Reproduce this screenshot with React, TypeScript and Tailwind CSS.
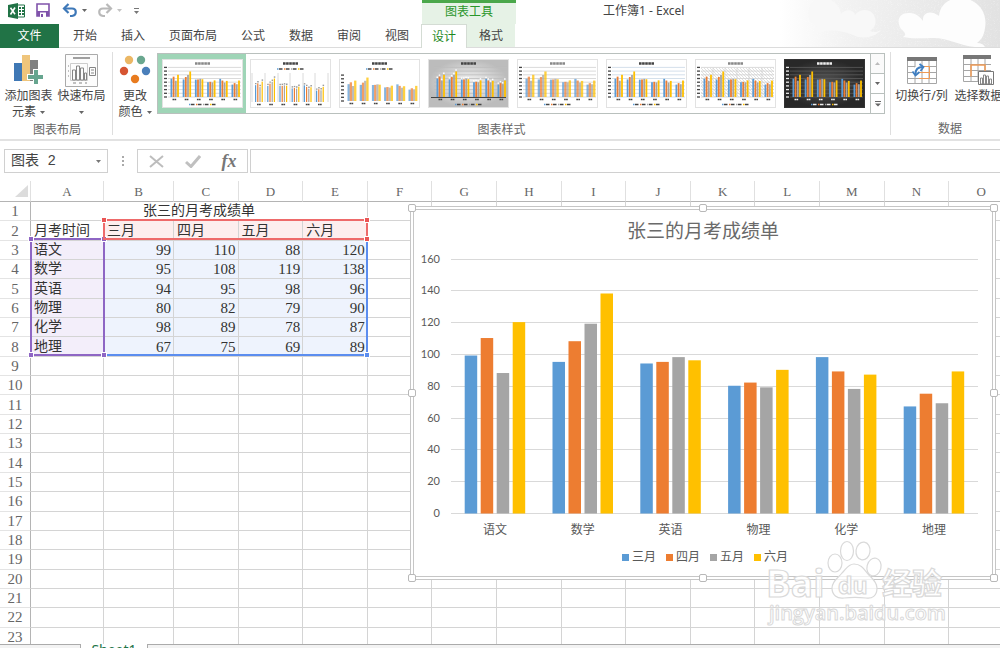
import { ReactNode } from 'react';
import clsx from 'clsx';

const SERIES = [
  { name: '三月', color: '#5b9bd5', values: [99, 95, 94, 80, 98, 67] },
  { name: '四月', color: '#ed7d31', values: [110, 108, 95, 82, 89, 75] },
  { name: '五月', color: '#a5a5a5', values: [88, 119, 98, 79, 78, 69] },
  { name: '六月', color: '#ffc000', values: [120, 138, 96, 90, 87, 89] },
];

const SUBJECTS = ['语文', '数学', '英语', '物理', '化学', '地理'];
const TABS = ['开始', '插入', '页面布局', '公式', '数据', '审阅', '视图'];
const COLUMNS = 'ABCDEFGHIJKLMNO'.split('');
const TITLE = '张三的月考成绩单';

type ThumbKind = 'plain' | 'panels' | 'wide' | 'gray' | 'soft' | 'blue' | 'hatch' | 'dark';
const THUMBS: ThumbKind[] = ['plain', 'panels', 'wide', 'gray', 'soft', 'blue', 'hatch', 'dark'];

export default function App() {
  return (
    <div className="flex h-screen flex-col overflow-hidden bg-white font-['Noto_Sans','Noto_Sans_CJK_SC',sans-serif] text-xs text-[#444]">
      <Header />
      <Ribbon />
      <FormulaBar />
      <Sheet />
      <footer className="flex h-1 shrink-0 overflow-hidden">
        <div className="w-[81px] border-t border-r border-[#ababab] bg-[#f3f3f3]" />
        <button className="h-3 w-[66px] shrink-0 bg-white text-sm leading-3 text-[#217346]">Sheet1</button>
        <div className="flex-1 border-t border-l border-[#ababab] bg-[#f3f3f3]" />
      </footer>
    </div>
  );
}

function Header() {
  return (
    <header className="relative shrink-0">
      <Clouds />
      {/* Quick access + title */}
      <div className="relative flex h-6">
        <div className="flex w-[422px] shrink-0 items-start pt-[3px] pl-2">
          <ExcelLogo />
          <button aria-label="保存" className="ml-[11px]">
            <svg width="14" height="14" viewBox="0 0 14 14">
              <path d="M1 1h12v12H1z" fill="#fff" stroke="#8053ab" strokeWidth="1.6" />
              <path d="M1 8h12v5H1z" fill="#8053ab" />
              <path d="M4 9.500h6V14H4z" fill="#fff" />
              <path d="M5 11h2v3H5z" fill="#8053ab" />
            </svg>
          </button>
          <button aria-label="撤消" className="ml-3">
            <UndoArrow color="#3e78b8" />
          </button>
          <Caret className="mt-[6px] ml-1" color="#666" />
          <button aria-label="恢复" className="ml-[10px] -scale-x-100">
            <UndoArrow color="#b9b9b9" />
          </button>
          <Caret className="mt-[6px] ml-1" color="#c4c4c4" />
          <svg className="mt-[5px] ml-3" width="5" height="7" viewBox="0 0 5 7">
            <path d="M0 .5h5" stroke="#777" />
            <path d="M0 3h5L2.5 6z" fill="#777" />
          </svg>
        </div>
        <div className="w-[94px] shrink-0 border-t-[3px] border-[#4ba84b] bg-[#e6f2e6] text-center leading-[17px] text-[#2a962a]">图表工具</div>
        <h1 className="ml-[87px] leading-[22px]">工作簿1 - Excel</h1>
      </div>

      <nav className="relative flex h-6 border-b border-[#dcdcdc]">
        <button className="mr-0.5 h-6 w-[59px] bg-[#217346] text-white">文件</button>
        {TABS.map(t => (
          <button key={t} className="px-3">{t}</button>
        ))}
        <button className="h-6 w-[46px] border border-b-0 border-[#d4dcd4] bg-white text-[#1e8a1e]">设计</button>
        <button className="w-12 bg-[#e6f2e6]">格式</button>
      </nav>
    </header>
  );
}

function Ribbon() {
  return (
    <div className="flex h-[93px] shrink-0 overflow-hidden border-b-2 border-[#e2e2e2]">
      <Group label="图表布局" className="w-[112px] pl-0.5">
        <BigButton className="w-[53px]" icon={<AddElementIcon />} lines={['添加图表', '元素']} caret />
        <BigButton className="w-[53px]" icon={<QuickLayoutIcon />} lines={['快速布局', '']} caret />
      </Group>
      <Divider />
      <Group label="图表样式" className="w-[777px]">
        <BigButton className="w-11" icon={<PaletteIcon />} lines={['更改', '颜色']} caret />
        <div className="mt-[5px] flex h-[61px] w-[728px] border border-[#b9c0bd]">
          <div className="flex flex-1 gap-2">
            {THUMBS.map((kind, i) => (
              <button
                key={kind}
                aria-label={`样式 ${i + 1}`}
                className={clsx(
                  'flex shrink-0 items-center justify-center',
                  i === 0 ? '-mr-1 w-[88px] bg-[#9fd5b7]' : 'w-[81px]'
                )}
              >
                <Thumb kind={kind} />
              </button>
            ))}
          </div>
          <div className="flex w-[14px] flex-col divide-y divide-[#b9c0bd] border-l border-[#b9c0bd]">
            <button aria-label="上一行" className="flex flex-1 items-center justify-center bg-[#fafafa]">
              <svg width="5" height="3" viewBox="0 0 5 3"><path d="M0 3h5L2.5 0z" fill="#bbb" /></svg>
            </button>
            <button aria-label="下一行" className="flex flex-1 items-center justify-center">
              <Caret color="#666" />
            </button>
            <button aria-label="其他" className="flex flex-1 items-center justify-center">
              <svg width="6" height="6" viewBox="0 0 6 6">
                <path d="M0 .5h6" stroke="#666" />
                <path d="M0 2.5h6L3 5.5z" fill="#666" />
              </svg>
            </button>
          </div>
        </div>
      </Group>
      <Divider />
      <Group label="数据" className="w-[116px] pl-0.5">
        <BigButton className="w-[57px]" icon={<SwitchIcon />} lines={['切换行/列']} />
        <BigButton className="w-[57px]" icon={<SelectDataIcon />} lines={['选择数据']} />
      </Group>
    </div>
  );
}

function Group({ label, className, children }: { label: string; className: string; children: ReactNode }) {
  return (
    <section className={clsx('flex shrink-0 flex-col', className)}>
      <div className="flex h-[73px]">{children}</div>
      <p className="text-center leading-5 text-[#666]">{label}</p>
    </section>
  );
}

function Divider() {
  return <div className="my-1 w-px shrink-0 bg-[#dedede]" />;
}

function BigButton({ icon, lines, caret, className }: { icon: ReactNode; lines: string[]; caret?: boolean; className: string }) {
  return (
    <button className={clsx('flex shrink-0 flex-col items-center whitespace-nowrap', className)}>
      <span className="flex h-10 items-center justify-center pt-1">{icon}</span>
      {lines.map((line, i) => (
        <span key={i} className="flex h-4 items-center gap-1 leading-4">
          {line}
          {caret && i === lines.length - 1 && <Caret color="#666" />}
        </span>
      ))}
    </button>
  );
}

function FormulaBar() {
  return (
    <div className="flex h-10 shrink-0 items-center pl-1">
      <div className="flex h-6 w-[104px] shrink-0 items-center border border-[#d0d0d0] px-[6px]">
        <input
          aria-label="名称框"
          defaultValue="图表 2"
          className="w-full min-w-0 bg-transparent font-['Liberation_Mono','Noto_Sans_CJK_SC',monospace] text-sm outline-none"
        />
        <Caret color="#777" />
      </div>
      <svg className="mx-3 shrink-0" width="5" height="12" viewBox="0 0 5 12" fill="#aaa">
        <path d="M2 1h2v2H2zM2 5h2v2H2zM2 9h2v2H2z" />
      </svg>
      <div className="flex h-6 w-[111px] shrink-0 items-center justify-around border border-[#d0d0d0]">
        <button aria-label="取消">
          <svg width="15" height="13" viewBox="0 0 15 13"><path d="M1 1l13 11M14 1L1 12" stroke="#bdbdbd" strokeWidth="2" /></svg>
        </button>
        <button aria-label="输入">
          <svg width="16" height="13" viewBox="0 0 16 13"><path d="M1 7l5 4.500L15 1" fill="none" stroke="#c0c0c0" strokeWidth="3" /></svg>
        </button>
        <button className="font-['Liberation_Serif',serif] text-lg leading-5 font-bold text-[#777] italic">fx</button>
      </div>
      <input aria-label="编辑栏" className="ml-0.5 h-6 min-w-0 flex-1 border border-r-0 border-[#d0d0d0] px-2 outline-none" />
    </div>
  );
}

function Sheet() {
  return (
    <main className="relative min-h-0 flex-1 overflow-hidden">
      <table className="h-[466px] w-[1014px] table-fixed border-separate border-spacing-0 font-['Liberation_Serif','Noto_Sans_CJK_SC',serif] text-[15px] leading-[18px] text-[#333]">
        <colgroup>
          <col className="w-[31px]" />
          <col className="w-[73px]" />
          <col className="w-[70px]" />
        </colgroup>
        <thead>
          <tr className="h-5 text-[13px] text-[#666]">
            <th className="border-r border-b border-r-[#e0e0e0] border-b-[#b4b4b4] p-0">
              <svg className="mr-0.5 ml-auto" width="13" height="12" viewBox="0 0 13 12"><path d="M13 0v12H0z" fill="#dcdcdc" /></svg>
            </th>
            {COLUMNS.map(c => (
              <th key={c} className="border-r border-b border-r-[#e0e0e0] border-b-[#b4b4b4] p-0 pt-0.5 font-normal">{c}</th>
            ))}
          </tr>
        </thead>
        <tbody>
          {Array.from({ length: 23 }, (_, i) => i + 1).map(row => (
            <tr key={row}>
              <th className="border-r border-b border-r-[#b4b4b4] border-b-[#e4e4e4] p-0 font-normal text-[#666]">{row}</th>
              {row === 1 && (
                <td colSpan={5} className="border-r border-b border-[#d4d4d4] p-0 text-center text-sm leading-[18px]">{TITLE}</td>
              )}
              {COLUMNS.slice(row === 1 ? 5 : 0).map(c => (
                <Cell key={c} row={row} col={COLUMNS.indexOf(c)} />
              ))}
            </tr>
          ))}
        </tbody>
      </table>

      {/* Ranges that feed the chart */}
      <Range className="top-[57px] left-[103px] h-[118px] w-[265px] border-[#5b8def]" handle="bg-[#5b8def]" corners={['br']} />
      <Range className="top-[57px] left-[30px] h-[118px] w-[75px] border-[#8e66c4]" handle="bg-[#8e66c4]" corners={['tl', 'tr', 'bl', 'br']} />
      <Range className="top-[38px] left-[103px] h-[21px] w-[265px] border-[#ee6a6a]" handle="bg-[#ea5555]" corners={['tl', 'tr', 'br']} />

      <Chart />
      <Watermark />
    </main>
  );
}

function Cell({ row, col }: { row: number; col: number }) {
  const inTable = row >= 2 && row <= 8 && col < 5;
  let text: string | number = '';
  if (inTable) {
    if (col === 0) text = row === 2 ? '月考时间' : SUBJECTS[row - 3];
    else text = row === 2 ? SERIES[col - 1].name : SERIES[col - 1].values[row - 3];
  }
  return (
    <td
      className={clsx(
        'border-r border-b border-[#d4d4d4] p-0',
        typeof text === 'number' ? 'pr-0.5 text-right' : 'pl-[3px] text-sm leading-[18px]',
        inTable && row === 2 && col > 0 && 'bg-[#fdeeee]',
        inTable && row > 2 && col === 0 && 'bg-[#f3eefa]',
        inTable && row > 2 && col > 0 && 'bg-[#eef3fd]'
      )}
    >
      {text}
    </td>
  );
}

const CORNERS: Record<string, string> = {
  tl: '-top-[3px] -left-[3px]',
  tr: '-top-[3px] -right-[3px]',
  bl: '-bottom-[3px] -left-[3px]',
  br: '-right-[3px] -bottom-[3px]',
};

function Range({ className, handle, corners }: { className: string; handle: string; corners: string[] }) {
  return (
    <div className={clsx('pointer-events-none absolute border-2', className)}>
      {corners.map(c => (
        <i key={c} className={clsx('absolute size-1 outline outline-white', CORNERS[c], handle)} />
      ))}
    </div>
  );
}

const HANDLES = [
  '-top-[6px] -left-[6px]',
  '-top-[6px] left-1/2 -translate-x-1/2',
  '-top-[6px] -right-[6px]',
  'top-1/2 -left-[6px] -translate-y-1/2',
  'top-1/2 -right-[6px] -translate-y-1/2',
  '-bottom-[6px] -left-[6px]',
  '-bottom-[6px] left-1/2 -translate-x-1/2',
  '-right-[6px] -bottom-[6px]',
];

function Chart() {
  const y = (v: number) => 265 - (v * 254.5) / 160;
  return (
    <figure className="absolute top-[25px] left-[410px] h-[374px] w-[586px] border-4 border-double border-[#c6c6c6] bg-white text-[#595959]">
      <h2 className="h-[38px] pt-2 text-center text-[19px] leading-[26px] text-[#6a6a6a]">{TITLE}</h2>
      <svg width="578" height="290" viewBox="0 0 578 290" className="block">
        {[0, 20, 40, 60, 80, 100, 120, 140, 160].map(v => (
          <g key={v}>
            <path d={`M37 ${Math.round(y(v)) + 0.5}H564`} stroke="#d9d9d9" />
            <text x="26" y={y(v) + 4} textAnchor="end" fontSize="11" fill="#595959" className="font-['Lato',sans-serif]">{v}</text>
          </g>
        ))}
        {SUBJECTS.map((s, i) => {
          const cx = 81 + i * 87.8;
          return (
            <g key={s}>
              {SERIES.map((ser, j) => (
                <rect key={ser.name} x={cx - 30.3 + j * 16} y={y(ser.values[i])} width="12.5" height={265.5 - y(ser.values[i])} fill={ser.color} />
              ))}
              <text x={cx} y="286" textAnchor="middle" fontSize="12" fill="#595959">{s}</text>
            </g>
          );
        })}
      </svg>
      <figcaption className="flex justify-center gap-[10px] pt-[10px] pl-1 leading-[18px]">
        {SERIES.map(s => (
          <span key={s.name} className="flex items-center gap-[3px]">
            <i className="size-[7px]" style={{ background: s.color }} />
            {s.name}
          </span>
        ))}
      </figcaption>
      {HANDLES.map(h => (
        <i key={h} className={clsx('absolute size-2 rounded-[2px] border border-[#b8b8b8] bg-white', h)} />
      ))}
    </figure>
  );
}

function Watermark() {
  return (
    <svg className="pointer-events-none absolute top-[355px] left-[764px]" width="190" height="96" viewBox="0 0 190 96" fill="#fff" fillOpacity="0.75" stroke="#d9d9d9" strokeWidth="1.2">
      <text x="2" y="61" fontSize="37" fontWeight="700" className="font-['Open_Sans',sans-serif]">Bai</text>
      <text x="118" y="58" fontSize="30" fontWeight="700" className="font-['Noto_Sans_CJK_SC',sans-serif]">经验</text>
      <ellipse cx="71" cy="27" rx="7" ry="9" />
      <ellipse cx="83" cy="15" rx="6.500" ry="9.500" />
      <ellipse cx="99" cy="15" rx="7" ry="9" transform="rotate(8 99 15)" />
      <ellipse cx="110" cy="31" rx="7" ry="9" transform="rotate(14 110 31)" />
      <path d="M90 28c7 0 10 5 14 10 4 4 9 8 9 14 0 8-5 11-11 10-8-1-14-1-22 0-7 1-12-3-12-10 0-7 6-10 10-15 4-4 6-9 12-9z" />
      <text x="74" y="58" fontSize="23" fontWeight="700" className="font-['Open_Sans',sans-serif]">du</text>
      <text x="5" y="84" fontSize="20" fontWeight="600" strokeWidth="1" className="font-['Open_Sans',sans-serif]">jingyan.baidu.com</text>
    </svg>
  );
}

/* Gallery thumbnail: the same data, drawn at 81x49 in each style */
function Thumb({ kind }: { kind: ThumbKind }) {
  const dark = kind === 'dark';
  const topLegend = kind === 'panels' || kind === 'wide';
  const base = kind === 'panels' ? 43 : kind === 'wide' ? 42 : 38;
  const scale = topLegend ? 0.17 : 0.185;
  const barW = kind === 'panels' ? 1.2 : kind === 'wide' || kind === 'soft' ? 2.3 : 1.8;
  const ink = dark ? '#eee' : '#444';
  const grid = dark ? '#5c5c5c' : kind === 'gray' ? '#bdbdbd' : kind === 'blue' ? '#c9d8e6' : '#d0d0d0';
  return (
    <svg width="81" height="49" viewBox="0 0 81 49" className="shrink-0">
      <defs>
        <radialGradient id="thumb-gray"><stop offset="0" stopColor="#f8f8f8" /><stop offset="1" stopColor="#bcbcbc" /></radialGradient>
        <radialGradient id="thumb-dark"><stop offset="0" stopColor="#555" /><stop offset="1" stopColor="#282828" /></radialGradient>
        <pattern id="thumb-hatch" width="3" height="3" patternUnits="userSpaceOnUse"><path d="M0 0l3 3" stroke="#d4d4d4" strokeWidth="0.7" /></pattern>
      </defs>
      <rect x="0.500" y="0.500" width="80" height="48" fill={dark ? 'url(#thumb-dark)' : kind === 'gray' ? 'url(#thumb-gray)' : '#fff'} stroke={dark ? '#333' : '#e2e2e2'} />
      {kind === 'hatch' && <rect x="6" y="9" width="73" height="29" fill="url(#thumb-hatch)" />}
      {kind === 'panels'
        ? [2, 15, 28, 40, 53, 65, 78].map(x => <path key={x} d={`M${x} 14V43`} stroke={grid} strokeWidth="0.8" />)
        : [0, 1, 2, 3, 4, 5, 6, 7, 8].map(i => {
            const y = base - i * 3.7;
            if (topLegend && i > 7) return null;
            return (
              <g key={i}>
                {kind !== 'wide' && <path d={`M6 ${y}H79`} stroke={grid} strokeWidth="0.8" />}
                {kind !== 'gray' && <path d={`M2 ${y}h3`} stroke={ink} strokeWidth="1.300" />}
              </g>
            );
          })}
      {kind === 'hatch' && [18, 30, 42, 54, 67].map(x => <path key={x} d={`M${x} 9V38`} stroke={grid} strokeWidth="0.7" />)}
      <path d="M33 4.500h15" stroke={kind === 'plain' || kind === 'soft' || kind === 'hatch' ? '#888' : ink} strokeWidth="2.600" strokeDasharray="2.600 0.500" />
      {SUBJECTS.map((s, i) => {
        const x = (kind === 'panels' ? 5 : 8.5) + i * 12.2;
        return (
          <g key={s}>
            {SERIES.map((ser, j) => {
              const h = ser.values[i] * scale;
              return (
                <g key={ser.name}>
                  <rect x={x + j * 2.2} y={base - h} width={barW} height={h} fill={ser.color} fillOpacity={kind === 'soft' || kind === 'wide' ? 0.75 : 1} />
                  {(kind === 'panels' || kind === 'gray') && (
                    <path d={`M${x + j * 2.2} ${base - h - 1.5}h1.500`} stroke={kind === 'gray' ? '#fff' : '#999'} strokeWidth="1.400" />
                  )}
                </g>
              );
            })}
            <path d={`M${x + 2} ${base + 2.5}h4`} stroke={ink} strokeWidth="1.400" strokeDasharray="1.700 0.300" />
          </g>
        );
      })}
      {kind === 'gray' && <path d="M3 38.500H78" stroke="#444" />}
      {SERIES.map((s, i) => (
        <g key={s.name} strokeWidth="1.500">
          <path d={`M${27 + i * 7} ${topLegend ? 10 : 45.5}h1.500`} stroke={s.color} />
          <path d={`M${29 + i * 7} ${topLegend ? 10 : 45.5}h3.500`} stroke={ink} />
        </g>
      ))}
    </svg>
  );
}

function Caret({ color, className }: { color: string; className?: string }) {
  return (
    <svg className={clsx('shrink-0', className)} width="5" height="3" viewBox="0 0 5 3">
      <path d="M0 0h5L2.500 3z" fill={color} />
    </svg>
  );
}

function UndoArrow({ color }: { color: string }) {
  return (
    <svg width="16" height="15" viewBox="0 0 16 15" fill="none" stroke={color} strokeWidth="2.200">
      <path d="M2 5.500h8c5 0 5 7 0 7.500H8" />
      <path d="M6.500 1L2 5.500 6.500 10" />
    </svg>
  );
}

function ExcelLogo() {
  return (
    <svg width="17" height="16" viewBox="0 0 17 16">
      <path d="M9 2h7.500v12H9z" fill="#fff" stroke="#217346" />
      <path d="M11 4h2v2h-2zM14 4h2v2h-2zM11 7h2v2h-2zM14 7h2v2h-2zM11 10h2v2h-2zM14 10h2v2h-2z" fill="#217346" />
      <path d="M0 2l10-2v16L0 14z" fill="#217346" />
      <path d="M2.500 4.800l4.500 6.500M7 4.500l-4.500 7" stroke="#fff" strokeWidth="1.600" />
    </svg>
  );
}

function Clouds() {
  return (
    <svg className="absolute top-0 right-0" width="220" height="47" viewBox="0 0 220 47">
      <defs>
        <linearGradient id="sky"><stop offset="0" stopColor="#fff" /><stop offset="0.300" stopColor="#f2f2f2" /><stop offset="1" stopColor="#e2e2e2" /></linearGradient>
        <filter id="grain"><feTurbulence baseFrequency="0.7" numOctaves="2" /><feColorMatrix values="0 0 0 0 1 0 0 0 0 1 0 0 0 0 1 0.800 0 0 0 -0.250" /></filter>
      </defs>
      <path d="M0 0h220v47H0z" fill="url(#sky)" />
      <path d="M0 0h220v47H0z" filter="url(#grain)" />
      <path d="M30 22c-5-12 1-23 12-24 10 0 18 7 19 16 4-5 12-5 14 1 6-8 18-6 20 3 2 7-2 11-5 13 5 2 7 1 11-1-6 7-18 10-28 5-13-5-26-7-42 1 5-5 7-8 5-12z" fill="#f8f8f8" />
      <path d="M121 29c-6-10 0-17 9-16 6 0 10 4 13 8-1-8 7-12 16-5C160 4 170-2 180-2c17 0 28 14 25 30-1 8-4 12-8 15 4 0 6 1 8 4-21 2-34-9-51-9-12 0-22 1-31-1 4-2 2-5-2-8z" fill="#fdfdfd" />
    </svg>
  );
}

function AddElementIcon() {
  return (
    <svg width="29" height="30" viewBox="0 0 29 30">
      <path d="M0 8h8v18H0z" fill="#3f78b5" />
      <path d="M8 0h8v26H8z" fill="#efc57b" />
      <path d="M16 5h8v21h-8z" fill="#808080" />
      <path d="M19 14h6v5h5v6h-5v5h-6v-5h-6v-6h6z" fill="#fff" />
      <path d="M20 15h4v5h5v4h-5v5h-4v-5h-6v-4h6z" fill="#66a58f" />
    </svg>
  );
}

function QuickLayoutIcon() {
  return (
    <svg width="33" height="33" viewBox="0 0 33 33" fill="none" stroke="#858585">
      <path d="M.5.5h32v32H.5z" fill="#fcfcfc" stroke="#aaa" />
      <path d="M8 4h17" stroke="#a0a0a0" strokeWidth="2" />
      <path d="M5.500 9.500h17v17h-17z" stroke="#ccc" />
      <path d="M7.500 26V16h3v10zM11.500 26V12h3v14zM15.500 26V14h3v12zM19.500 26v-7h2v7z" />
      <path d="M24.500 13.500h6v8h-6z" />
      <path d="M26 16h3M26 19h3M3 12h1M3 17h1M3 22h1M8 29h3M14 29h3M20 29h2" />
    </svg>
  );
}

function PaletteIcon() {
  return (
    <svg width="32" height="30" viewBox="0 0 32 30">
      <circle cx="10" cy="5" r="4.200" fill="#ebb765" />
      <circle cx="22" cy="5" r="4.200" fill="#6aa78f" />
      <circle cx="5" cy="16" r="4.200" fill="#d65532" />
      <circle cx="27" cy="16" r="4.200" fill="#4a7fba" />
      <circle cx="16" cy="24" r="4.200" fill="#e87b1f" />
    </svg>
  );
}

function TableGrid() {
  return (
    <>
      <path d="M.5 2v24.500h29V2M8 3v24M15 3v24M22 3v24M0 9.500h30M0 15.500h30M0 21.500h30" fill="none" stroke="#a6a6a6" />
      <path d="M0 0h30v4H0z" fill="#777" />
    </>
  );
}

function SwitchIcon() {
  return (
    <svg width="30" height="27" viewBox="0 0 30 27">
      <TableGrid />
      <path d="M12 9.500h10.500v12H12M12 15.500h10" fill="none" stroke="#ee9a55" />
      <path d="M8 17c0-5 3-7 7-7" fill="none" stroke="#fff" strokeWidth="5" />
      <path d="M8.500 17c0-5 3-7 7-7" fill="none" stroke="#3f7ec1" strokeWidth="2" />
      <path d="M12.500 7l4 3-3 4M5.500 14.500l3 4 4-3.500" fill="none" stroke="#3f7ec1" strokeWidth="1.800" />
    </svg>
  );
}

function SelectDataIcon() {
  return (
    <svg width="31" height="30" viewBox="0 0 31 30">
      <TableGrid />
      <path d="M28 0h3v30h-3z" fill="#fff" />
      <path d="M8 21.500V10h14v8" fill="none" stroke="#ee9a55" strokeWidth="1.500" />
      <path d="M15.500 16.500h15v13h-15z" fill="#fff" stroke="#777" />
      <path d="M17.500 29v-6h2v6zM20.500 29v-9h2v9zM23.500 29v-8h2v8zM26.500 29v-5h2v5z" fill="none" stroke="#888" />
    </svg>
  );
}
